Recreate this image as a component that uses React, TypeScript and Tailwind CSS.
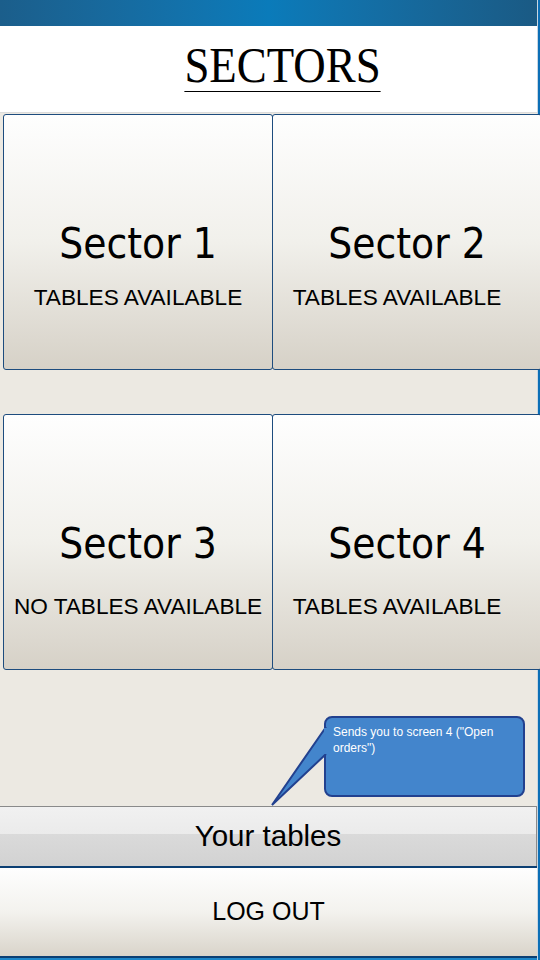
import React from 'react';

type Sector = { name: string; label: string; right?: boolean };

const ROWS: Sector[][] = [
  [
    { name: 'Sector 1', label: 'TABLES AVAILABLE' },
    { name: 'Sector 2', label: 'TABLES AVAILABLE', right: true },
  ],
  [
    { name: 'Sector 3', label: 'NO TABLES AVAILABLE' },
    { name: 'Sector 4', label: 'TABLES AVAILABLE', right: true },
  ],
];

const tahoma = { fontFamily: '"DejaVu Sans Condensed", "DejaVu Sans", sans-serif' };
const arial = { fontFamily: '"Liberation Sans", Arial, sans-serif' };

function SectorCard({ s, low }: { s: Sector; low?: boolean }) {
  return (
    <button
      className={`w-[270px] h-[256px] shrink-0 rounded-[3px] border border-[#1d4c7e] bg-gradient-to-b from-[#fefefe] via-[#f1f0eb] to-[#d6d1c7] flex flex-col items-center pt-[108px] text-black ${
        s.right ? '-ml-px' : ''
      }`}
    >
      <div className="text-[42px] leading-[42px]" style={tahoma}>
        {s.name}
      </div>
      <div
        className={`text-[22.6px] leading-[22px] ${low ? 'mt-[31px]' : 'mt-[22px]'} ${s.right ? 'mr-[20px]' : ''}`}
        style={arial}
      >
        {s.label}
      </div>
    </button>
  );
}

export default function App() {
  return (
    <div className="w-[540px] h-[960px] flex overflow-hidden bg-[#ece9e2]">
      <div className="w-[537px] h-full flex flex-col relative">
        <div className="h-[26px] bg-gradient-to-r from-[#1b5e8b] via-[#0a7bba] to-[#1a5a84]" />
        <div className="h-[87px] bg-white flex justify-center border-b border-[#dcdcdc]">
          <div
            className="mt-[13px] ml-[27px] text-[51px] leading-[52px] h-[53px] text-black border-b border-black scale-x-[0.88] origin-center"
            style={{ fontFamily: '"Liberation Serif", "Times New Roman", serif' }}
          >
            SECTORS
          </div>
        </div>

        <div className="pl-[3px] pt-[1px] flex flex-col gap-[44px]">
          {ROWS.map((row, i) => (
            <div key={i} className="flex">
              {row.map((s) => (
                <SectorCard key={s.name} s={s} low={i === 1} />
              ))}
            </div>
          ))}
        </div>

        <div className="flex-1" />

        <button className="h-[60px] border-t border-r border-[#8a8a8a] bg-[linear-gradient(to_bottom,#f1f1f1_0%,#ebebeb_45%,#dadada_46%,#d2d2d2_100%)] flex items-center justify-center text-[29.5px] text-black" style={arial}>
          Your tables
        </button>
        <button
          className="h-[92px] border-t-2 border-b-2 border-[#0c3f73] bg-gradient-to-b from-[#fefefe] via-[#f3f2ee] to-[#d9d4ca] flex items-center justify-center text-[25px] text-black"
          style={arial}
        >
          LOG OUT
        </button>
        <div className="h-[2px] bg-[#1e86c8]" />

        <div className="absolute left-[324px] top-[716px] w-[201px] h-[81px] rounded-[8px] border-2 border-[#22418f] bg-[#4385cc] px-[7px] pt-[6px] text-[12px] leading-[16px] text-white" style={arial}>
          Sends you to screen 4 ("Open orders")
        </div>
        <svg className="absolute left-[270px] top-[722px]" width="60" height="86" viewBox="0 0 60 86">
          <path d="M56 5 L2 83 L56 32" fill="#4385cc" stroke="#22418f" strokeWidth="2" strokeLinejoin="miter" />
          <rect x="54" y="6" width="6" height="26" fill="#4385cc" />
        </svg>
      </div>
      <div className="w-[3px] h-full bg-[#0c6fb6] border-l border-[#c8d6e2]" />
    </div>
  );
}
